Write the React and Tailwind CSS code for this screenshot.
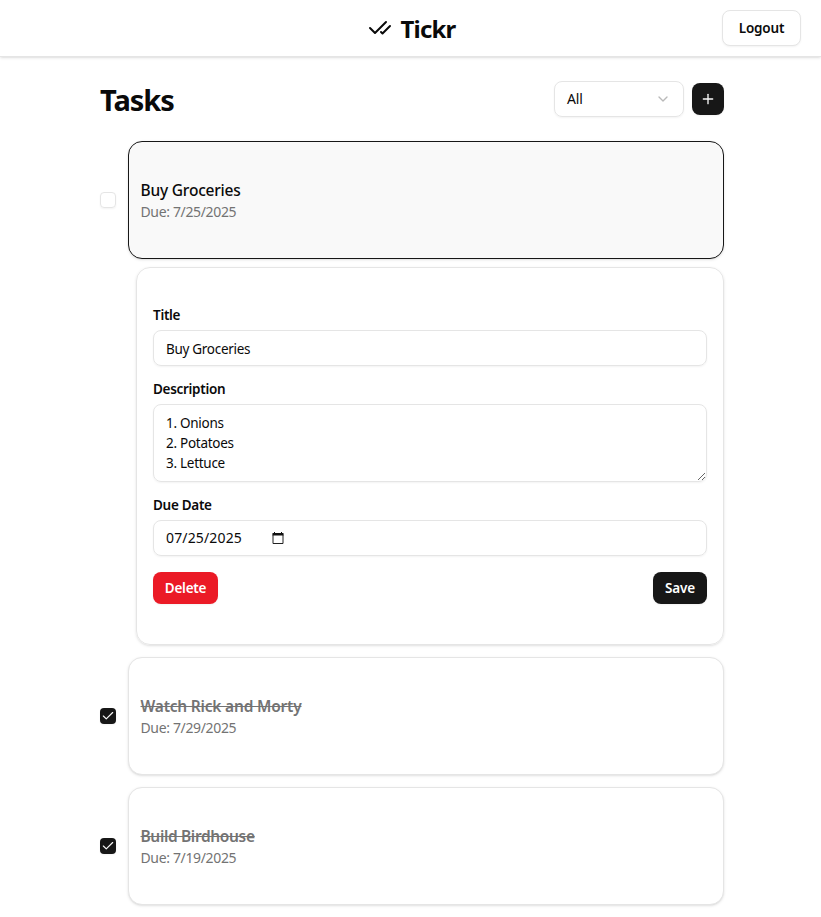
import React from "react";
import { Plus, Check, CheckCheck, ChevronDown } from "lucide-react";

function TaskBox({ title, due, done, selected, tracking }) {
  return (
    <div className="flex items-center gap-3">
      <div
        className={
          done
            ? "flex size-4 shrink-0 items-center justify-center rounded-[4px] bg-[#171717] text-[#fafafa] shadow-xs"
            : "size-4 shrink-0 rounded-[4px] border border-[#e5e5e5] shadow-xs"
        }
      >
        {done && <Check size={14} strokeWidth={2} />}
      </div>
      <div
        className={
          selected
            ? "h-[118px] flex-1 rounded-[14px] border border-[#171717] bg-[#f9f9f9] px-[11.5px] py-9 shadow-sm"
            : "h-[118px] flex-1 rounded-[14px] border border-[#e5e5e5] bg-white px-[11.5px] py-9 shadow-sm"
        }
      >
        <h3
          className={
            (done
              ? "text-[15.5px] leading-6 font-semibold text-[#737373] line-through decoration-1 "
              : "text-[15.5px] leading-6 font-medium ") + tracking
          }
        >
          {title}
        </h3>
        <p className="text-sm leading-5 tracking-[-0.35px] text-[#737373]">{due}</p>
      </div>
    </div>
  );
}

function Label({ children }) {
  return <label className="mb-2 block text-[13.5px] leading-[14px] font-semibold tracking-[-0.3px]">{children}</label>;
}

export default function App() {
  return (
    <div className="h-[917px] w-full overflow-hidden bg-white font-['Noto_Sans','Open_Sans',sans-serif] text-[#0a0a0a]">
      <header className="grid h-[57px] grid-cols-[1fr_auto_1fr] items-center border-b border-[#e5e5e5] pr-5 pl-[23px] shadow-sm">
        <div />
        <div className="flex items-center gap-2">
          <CheckCheck size={24} strokeWidth={2} />
          <span className="pt-0.5 text-2xl leading-8 font-bold tracking-[-0.8px]">Tickr</span>
        </div>
        <button className="h-9 w-[79px] justify-self-end rounded-lg border border-[#e5e5e5] bg-white text-[13.5px] font-semibold tracking-[-0.2px] shadow-xs">
          Logout
        </button>
      </header>
      <main className="mr-[97px] ml-[100px] pt-6">
        <div className="mb-6 flex h-9 items-center gap-2">
          <h1 className="flex-1 pt-0.5 text-[29px] leading-9 font-bold tracking-[-1px]">Tasks</h1>
          <div className="flex h-9 w-[130px] items-center justify-between rounded-lg border border-[#e5e5e5] px-3 text-sm tracking-[-0.2px] shadow-xs">
            All
            <ChevronDown size={16} className="text-[#b9b9b9]" />
          </div>
          <button className="flex size-8 items-center justify-center rounded-lg bg-[#171717] text-[#fafafa] shadow-xs">
            <Plus size={16} strokeWidth={2} />
          </button>
        </div>

        <TaskBox title="Buy Groceries" due="Due: 7/25/2025" tracking="tracking-[-0.2px]" selected />

        <div className="mt-2 mb-3 ml-9 h-[378px] rounded-[14px] border border-[#e5e5e5] px-4 py-10 shadow-sm">
          <Label>Title</Label>
          <div className="mb-4 flex h-9 items-center rounded-lg border border-[#e5e5e5] px-3 pt-0.5 text-[13.5px] tracking-[-0.3px] shadow-xs">
            Buy Groceries
          </div>
          <Label>Description</Label>
          <textarea
            className="mb-4 block h-[78px] w-full overflow-hidden rounded-lg border border-[#e5e5e5] px-3 py-2 text-[13.5px] leading-5 tracking-[-0.28px] shadow-xs"
            defaultValue={"1. Onions\n2. Potatoes\n3. Lettuce"}
          />
          <Label>Due Date</Label>
          <div className="mb-4 flex h-9 items-center rounded-lg border border-[#e5e5e5] px-3 text-sm shadow-xs">
            <span className="w-[105px] tracking-[0.15px]">07/25/2025</span>
            <svg width="14" height="14" viewBox="0 0 14 14" fill="none">
              <path d="M2 3.5H12V12.5H2Z" stroke="#222" />
              <path d="M1.5 2H12.5V4.5H1.5ZM3 1H4V2H3ZM10 1H11V2H10Z" fill="#111" />
            </svg>
          </div>
          <div className="flex justify-between text-[13.5px] font-semibold text-white">
            <button className="h-8 w-[65px] rounded-lg bg-[#eb1a26] tracking-[-0.25px] shadow-xs">Delete</button>
            <button className="h-8 w-[54px] rounded-lg bg-[#171717] tracking-[-0.2px] shadow-xs">Save</button>
          </div>
        </div>

        <div className="flex flex-col gap-3">
          <TaskBox title="Watch Rick and Morty" due="Due: 7/29/2025" tracking="tracking-[-0.2px]" done />
          <TaskBox title="Build Birdhouse" due="Due: 7/19/2025" tracking="tracking-[-0.35px]" done />
        </div>
      </main>
    </div>
  );
}
